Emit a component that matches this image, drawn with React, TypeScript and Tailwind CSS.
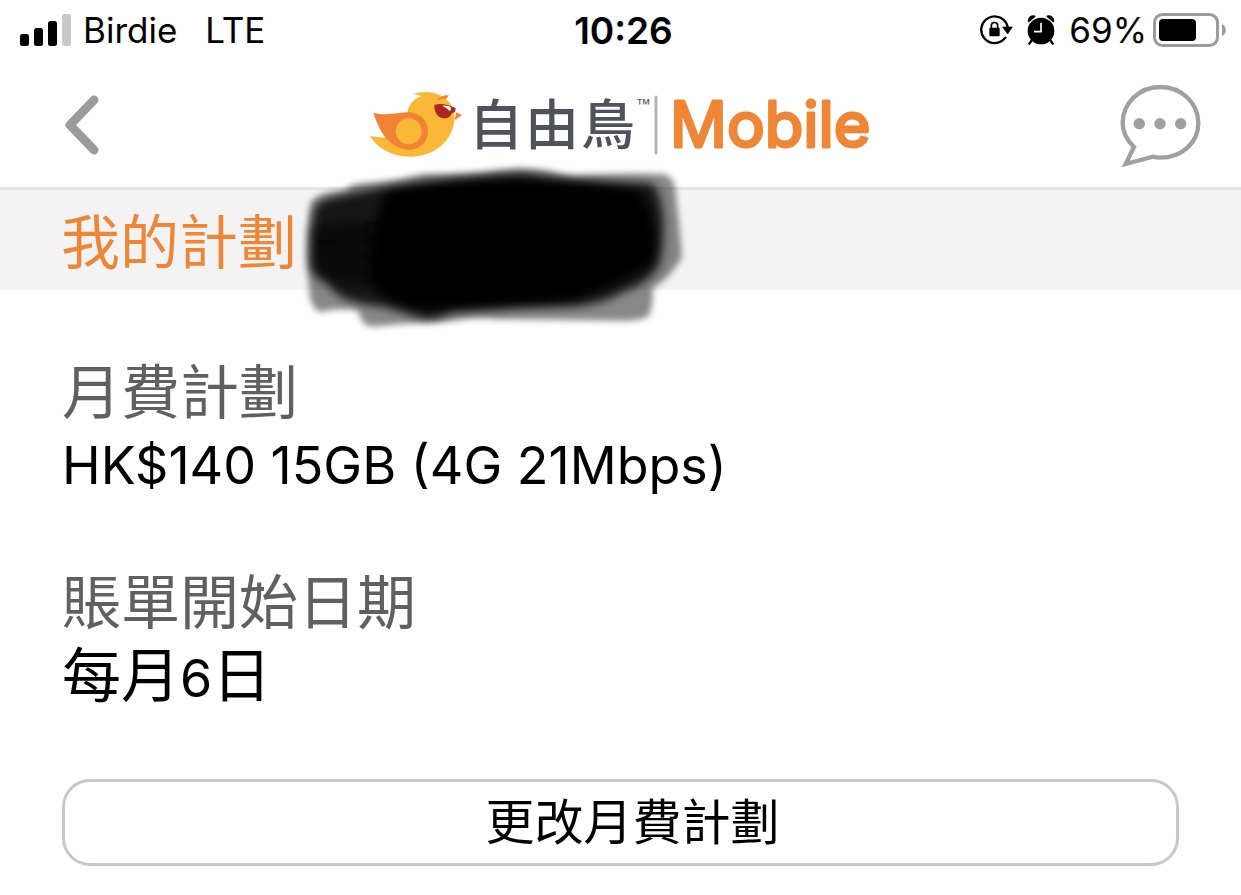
import type { ReactNode } from "react";

const PLAN_ITEMS: { label: string; value: ReactNode }[] = [
  { label: "月費計劃", value: "HK$140 15GB (4G 21Mbps)" },
  {
    label: "賬單開始日期",
    value: (
      <>
        <span className="text-[59px]">每月</span>6<span className="text-[59px]">日</span>
      </>
    ),
  },
];

function SignalIcon() {
  return (
    <svg width="51" height="32" viewBox="0 0 51 32" aria-hidden="true">
      <rect x="0" y="20" width="9" height="12" rx="2.5" />
      <rect x="14" y="14" width="9" height="18" rx="2.5" />
      <rect x="28" y="7" width="9" height="25" rx="2.5" />
      <rect x="42" y="0" width="9" height="32" rx="2.5" fill="#c9c9c9" />
    </svg>
  );
}

function RotationLockIcon() {
  return (
    <svg width="33" height="30" viewBox="0 0 99 90" aria-hidden="true">
      <path d="M76 68A40 40 0 1 1 83 36" fill="none" stroke="#000" strokeWidth="7" strokeLinecap="round" />
      <path d="M68 36H97L83 57Z" stroke="#000" strokeWidth="2" strokeLinejoin="round" />
      <rect x="28" y="38" width="31" height="26" rx="3" />
      <path d="M34 40V32a9.500 9.500 0 0 1 19 0v8" fill="none" stroke="#000" strokeWidth="5" />
    </svg>
  );
}

function AlarmIcon() {
  return (
    <svg width="28" height="30" viewBox="0 0 84 90" aria-hidden="true">
      <circle cx="42" cy="48" r="40" />
      <path d="M5 19A14 14 0 0 1 23 4ZM79 19A14 14 0 0 0 61 4Z" stroke="#000" strokeWidth="5" strokeLinejoin="round" />
      <path d="M14 76L7 86M70 76L77 86" stroke="#000" strokeWidth="7" strokeLinecap="round" />
      <path d="M42 23V50H21" fill="none" stroke="#fff" strokeWidth="5" />
    </svg>
  );
}

function BatteryIcon() {
  return (
    <svg width="74" height="34" viewBox="0 0 74 34" aria-hidden="true">
      <rect x="1.5" y="1.5" width="63" height="31" rx="8" fill="none" stroke="#9b9b9b" strokeWidth="3" />
      <rect x="6" y="6" width="37" height="22" rx="4" />
      <path d="M69 11c5 2 5 10 0 12z" fill="#9b9b9b" />
    </svg>
  );
}

function ChatIcon() {
  return (
    <svg width="81" height="86" viewBox="0 -6 243 258" aria-hidden="true">
      <path
        d="M42 189C20 168 8 143 8 117C8 57 58 9 121 9S235 57 235 117S184 221 121 221C113 221 106 220 99 218L17 240Z"
        fill="none"
        stroke="#a0a0a0"
        strokeWidth="13"
      />
      <circle cx="58" cy="119" r="17" fill="#a0a0a0" />
      <circle cx="120" cy="119" r="17" fill="#a0a0a0" />
      <circle cx="182" cy="119" r="17" fill="#a0a0a0" />
    </svg>
  );
}

function Logo() {
  return (
    <svg width="505" height="85" viewBox="0 0 505 85" role="img" aria-label="自由鳥 Mobile">
      <g transform="scale(.33333)">
        <path
          d="M6 162C20 164 34 166 49 167L118 92C122 70 136 50 160 43C152 39 144 37 134 36C148 32 162 30 176 30C224 32 260 64 260 108C256 176 200 224 128 224C72 224 28 200 6 162Z"
          fill="#fbb836"
        />
        <path d="M16 92C55 103 90 91 122 91C155 91 180 116 180 148C180 180 156 203 125 203C75 201 40 168 16 92Z" fill="#f08434" />
        <circle cx="122" cy="148" r="39" fill="#fbb836" />
        <path d="M206 55C218 43 230 38 242 40L235 50C225 50 215 53 206 55Z" fill="#f08434" />
        <path d="M265 91L282 100L260 114Z" fill="#f08434" />
        <path d="M199 69C215 64 234 64 263 78L261 91C255 91 252 93 249 98C242 111 226 112 213 104C202 96 199 82 199 69Z" fill="#ad2722" />
        <path d="M223 70L245 73C251 79 250 85 244 87C239 79 231 78 223 70Z" fill="#fff" />
      </g>
      <g fill="#4f525a" fontSize="54" fontWeight="500" fontFamily="'Noto Sans CJK TC', sans-serif">
        <text x="101" y="63">自</text>
        <text x="157" y="63">由</text>
        <text x="213" y="63">鳥</text>
      </g>
      <text x="268" y="27" fontSize="15" fill="#4f525a" fontFamily="'Liberation Sans', sans-serif">™</text>
      <path d="M288 15V71" stroke="#b5b5b5" strokeWidth="3" strokeLinecap="round" />
      <text
        x="302"
        y="65"
        fontSize="63"
        fontWeight="400"
        fontFamily="Inter, sans-serif"
        fill="#ef8636"
        stroke="#ef8636"
        strokeWidth="3"
        strokeLinejoin="round"
      >
        Mobile
      </text>
    </svg>
  );
}

// marker scribble that hides the phone number
function Scribble() {
  return (
    <svg className="absolute -top-[30px] left-[290px]" width="410" height="180" viewBox="0 0 1230 540" aria-hidden="true">
      <defs>
        <filter id="soft"><feGaussianBlur stdDeviation="9" /></filter>
        <filter id="softer"><feGaussianBlur stdDeviation="15" /></filter>
      </defs>
      <path
        d="M62 130Q75 98 165 92Q180 68 240 68Q330 62 400 42Q520 44 600 36Q700 18 780 34Q830 50 860 48Q1000 38 1120 42Q1152 50 1156 90Q1168 190 1176 290Q1140 355 1088 385Q1090 430 1078 465Q1060 482 1010 482L620 478Q560 470 480 484Q350 490 245 500Q212 494 206 452Q140 442 90 456Q58 440 58 390Q40 260 62 130Z"
        opacity=".46"
        filter="url(#soft)"
      />
      <g filter="url(#softer)">
        <path
          d="M76 140Q90 115 200 98Q300 75 420 60Q600 40 700 38Q850 60 1080 70Q1105 80 1112 130Q1130 200 1110 310Q1080 370 1000 395Q930 438 820 442Q560 450 480 460Q430 488 390 474L280 440Q140 430 112 370Q70 355 62 320Q56 230 76 140Z"
          opacity=".84"
        />
        <path d="M60 205Q140 180 260 190L300 380L110 362Q65 345 60 300Z" opacity=".5" />
        <path d="M290 90Q420 68 660 58Q880 64 1030 85Q1070 110 1085 180Q1110 230 1085 310Q1000 370 850 420Q600 448 400 450Q270 430 245 370Q230 240 290 90Z" />
      </g>
    </svg>
  );
}

export default function App() {
  return (
    <div className="min-h-screen bg-[#fefefe] font-[Inter,'Noto_Sans_CJK_TC',sans-serif] text-black">
      <div className="grid h-[60px] grid-cols-[1fr_auto_1fr] items-center pr-[14px] pl-5 text-[35px] leading-none">
        <div className="flex items-center gap-3">
          <SignalIcon />
          <span>Birdie</span>
          <span className="ml-4">LTE</span>
        </div>
        <time className="text-[37px] font-semibold">10:26</time>
        <div className="flex items-center justify-end gap-[14px]">
          <RotationLockIcon />
          <AlarmIcon />
          <div className="flex items-center gap-[6px]">
            <span>69%</span>
            <BatteryIcon />
          </div>
        </div>
      </div>

      <header className="grid h-[130px] grid-cols-[1fr_auto_1fr] items-center border-b-3 border-[#e6e6e6] px-10 pt-[2px]">
        <button type="button" aria-label="返回" className="ml-6 justify-self-start">
          <svg width="36" height="60" viewBox="0 0 36 60" fill="none" stroke="#9b9b9b" strokeWidth="9" strokeLinecap="round" strokeLinejoin="round">
            <path d="M30 5L6 30L30 55" />
          </svg>
        </button>
        <Logo />
        <button type="button" aria-label="對話" className="justify-self-end">
          <ChatIcon />
        </button>
      </header>

      <div className="relative flex h-[100px] items-center bg-[#f3f3f3] px-[61px] pt-1">
        <h1 className="text-[59px] leading-[73px] whitespace-nowrap text-[#ef8636]">我的計劃 - 5</h1>
        <Scribble />
      </div>

      <main className="px-[62px] pt-[66px] pb-[28px]">
        <dl className="flex flex-col gap-16">
          {PLAN_ITEMS.map((item) => (
            <div key={item.label}>
              <dt className="text-[59px] leading-[73px] text-[#606060]">{item.label}</dt>
              <dd className="text-[52px] leading-[73px]">{item.value}</dd>
            </div>
          ))}
        </dl>
        <button
          type="button"
          className="mt-16 h-[87px] w-full rounded-[28px] border-3 border-[#c8c8c8] pl-6 text-[49px] leading-none"
        >
          更改月費計劃
        </button>
      </main>
    </div>
  );
}
